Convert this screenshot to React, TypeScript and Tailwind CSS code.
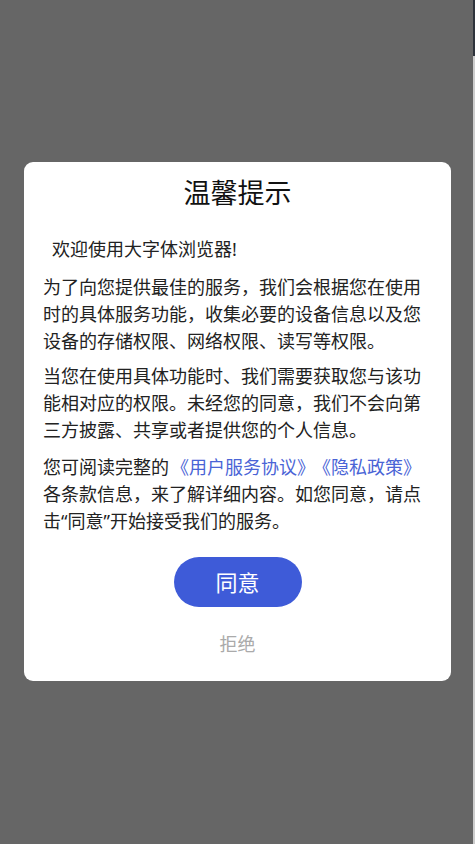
import React from "react";

const FONT = {
  fontFamily: "'Noto Sans', 'Noto Sans CJK SC', sans-serif",
};

export default function App() {
  return (
    <div className="flex min-h-screen bg-[#666666]" style={FONT}>
      {/* 遮罩 + 弹窗 */}
      <div className="flex-1 pt-[162px] pl-[24px] pr-[22px]">
        <div className="rounded-[9px] bg-white px-[19px] pt-[13px] pb-[23px]">
          <h1 className="text-center text-[27px] leading-[36px] text-[#111]">温馨提示</h1>

          <div className="mt-[25px] text-[18px] leading-[27px] text-[#222]">
            <p className="pl-[9px]">欢迎使用大字体浏览器!</p>
            <p className="mt-[11px]">
              为了向您提供最佳的服务，我们会根据您在使用时的具体服务功能，收集必要的设备信息以及您设备的存储权限、网络权限、读写等权限。
            </p>
            <p className="mt-[8px]">
              当您在使用具体功能时、我们需要获取您与该功能相对应的权限。未经您的同意，我们不会向第三方披露、共享或者提供您的个人信息。
            </p>
            <p className="mt-[10px]">
              您可阅读完整的
              <span className="ml-[2px] text-[#4a64d6]">《用户服务协议》</span>
              <span className="ml-[7px] text-[#4a64d6]">《隐私政策》</span>
              <br />
              各条款信息，来了解详细内容。如您同意，请点击“同意”开始接受我们的服务。
            </p>
          </div>

          <div className="mt-[22px] flex flex-col items-center">
            <button className="h-[50px] w-[128px] rounded-full bg-[#3e5bd8] text-[22px] text-white">
              同意
            </button>
            <button className="mt-[24px] text-[18px] leading-[27px] text-[#aaaaaa]">拒绝</button>
          </div>
        </div>
      </div>

      {/* 右侧露出的底层页面 */}
      <div className="flex w-[2px] flex-col">
        <div className="h-[56px] bg-[#2e333b]" />
        <div className="flex-1 bg-[#cdcdcd]" />
      </div>
    </div>
  );
}
